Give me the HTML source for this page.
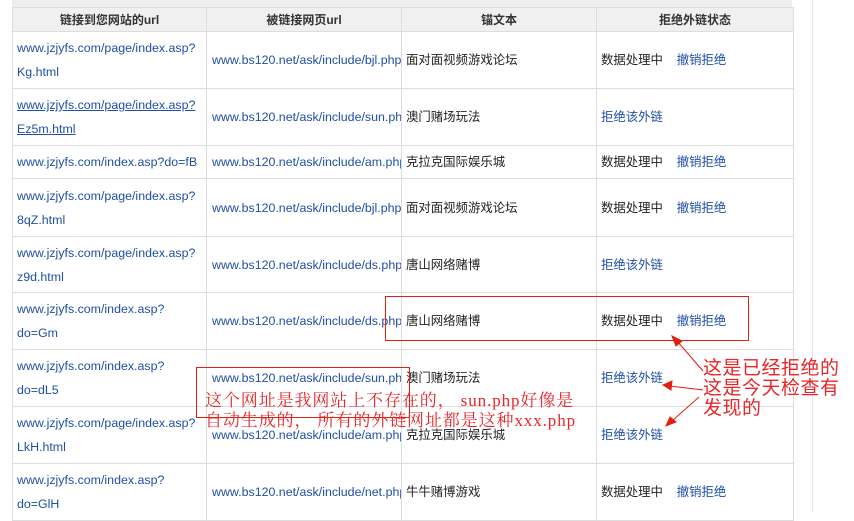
<!DOCTYPE html>
<html><head><meta charset="utf-8"><style>
*{margin:0;padding:0;box-sizing:border-box}
body{width:854px;height:512px;overflow:hidden;background:#fff;font-family:"Liberation Sans","Noto Sans CJK SC",sans-serif;font-size:12.4px;position:relative}
.top{position:absolute;left:12px;top:0;width:780px;height:7px;background:#eee}
.vl{position:absolute;left:812px;top:0;width:1px;height:512px;background:#e6e6e6}
table{position:absolute;left:12px;top:7px;border-collapse:collapse;width:781px;table-layout:fixed}
td,th{border:1px solid #ddd;vertical-align:middle;padding:0 4px;white-space:nowrap;overflow:hidden}
th{background:#f0f0f0;height:24px;font-size:12px;color:#333;font-weight:bold}
td{color:#222;line-height:24px}
a{color:#1f4fa8;text-decoration:none}
td.c2{padding-left:5px}
td.c3{padding-left:4px}
.u{text-decoration:underline}
.red{position:absolute;color:#e8262a;font-family:"Liberation Serif","Noto Serif CJK SC",serif}
.box{position:absolute;border:1px solid #d21;}
</style></head><body>
<div class="top"></div><div class="vl"></div>
<table>
<colgroup><col style="width:194px"><col style="width:195px"><col style="width:195px"><col style="width:197px"></colgroup>
<tr><th>链接到您网站的url</th><th>被链接网页url</th><th>锚文本</th><th>拒绝外链状态</th></tr>
<tr style="height:57px"><td><a>www.jzjyfs.com/page/index.asp?<br>Kg.html</a></td><td class="c2"><a>www.bs120.net/ask/include/bjl.php</a></td><td class="c3">面对面视频游戏论坛</td><td>数据处理中 &nbsp;&nbsp; <a>撤销拒绝</a></td></tr>
<tr style="height:57px"><td><a class="u">www.jzjyfs.com/page/index.asp?<br>Ez5m.html</a></td><td class="c2"><a>www.bs120.net/ask/include/sun.php</a></td><td class="c3">澳门赌场玩法</td><td><a>拒绝该外链</a></td></tr>
<tr style="height:33px"><td><a>www.jzjyfs.com/index.asp?do=fB</a></td><td class="c2"><a>www.bs120.net/ask/include/am.php</a></td><td class="c3">克拉克国际娱乐城</td><td>数据处理中 &nbsp;&nbsp; <a>撤销拒绝</a></td></tr>
<tr style="height:58px"><td><a>www.jzjyfs.com/page/index.asp?<br>8qZ.html</a></td><td class="c2"><a>www.bs120.net/ask/include/bjl.php</a></td><td class="c3">面对面视频游戏论坛</td><td>数据处理中 &nbsp;&nbsp; <a>撤销拒绝</a></td></tr>
<tr style="height:56px"><td><a>www.jzjyfs.com/page/index.asp?<br>z9d.html</a></td><td class="c2"><a>www.bs120.net/ask/include/ds.php</a></td><td class="c3">唐山网络赌博</td><td><a>拒绝该外链</a></td></tr>
<tr style="height:57px"><td><a>www.jzjyfs.com/index.asp?<br>do=Gm</a></td><td class="c2"><a>www.bs120.net/ask/include/ds.php</a></td><td class="c3">唐山网络赌博</td><td>数据处理中 &nbsp;&nbsp; <a>撤销拒绝</a></td></tr>
<tr style="height:57px"><td><a>www.jzjyfs.com/index.asp?<br>do=dL5</a></td><td class="c2"><a>www.bs120.net/ask/include/sun.php</a></td><td class="c3">澳门赌场玩法</td><td><a>拒绝该外链</a></td></tr>
<tr style="height:57px"><td><a>www.jzjyfs.com/page/index.asp?<br>LkH.html</a></td><td class="c2"><a>www.bs120.net/ask/include/am.php</a></td><td class="c3">克拉克国际娱乐城</td><td><a>拒绝该外链</a></td></tr>
<tr style="height:57px"><td><a>www.jzjyfs.com/index.asp?<br>do=GlH</a></td><td class="c2"><a>www.bs120.net/ask/include/net.php</a></td><td class="c3">牛牛赌博游戏</td><td>数据处理中 &nbsp;&nbsp; <a>撤销拒绝</a></td></tr>
</table>
<div class="box" style="left:385px;top:296px;width:364px;height:45px"></div>
<div class="box" style="left:196px;top:367px;width:214px;height:51px"></div>
<div class="red" style="left:205px;top:391px;font-size:17px;line-height:20px;letter-spacing:0.9px;white-space:nowrap">这个网址是我网站上不存在的， sun.php好像是<br>自动生成的， 所有的外链网址都是这种xxx.php</div>
<div class="red" style="left:703px;top:357px;font-size:19px;line-height:20px;letter-spacing:0.5px;white-space:nowrap;font-family:'Noto Sans CJK SC',sans-serif">这是已经拒绝的<br>这是今天检查有<br>发现的</div>
<svg style="position:absolute;left:0;top:0" width="854" height="512">
<g stroke="#d21" stroke-width="1" fill="#d21">
<line x1="703" y1="371" x2="677" y2="341"/><polygon points="672,336 682,341 676,346"/>
<line x1="703" y1="390" x2="670" y2="386"/><polygon points="663,385 672,381 671,390"/>
<line x1="699" y1="397" x2="672" y2="421"/><polygon points="666,426 670,417 676,422"/>
</g></svg>
</body></html>
